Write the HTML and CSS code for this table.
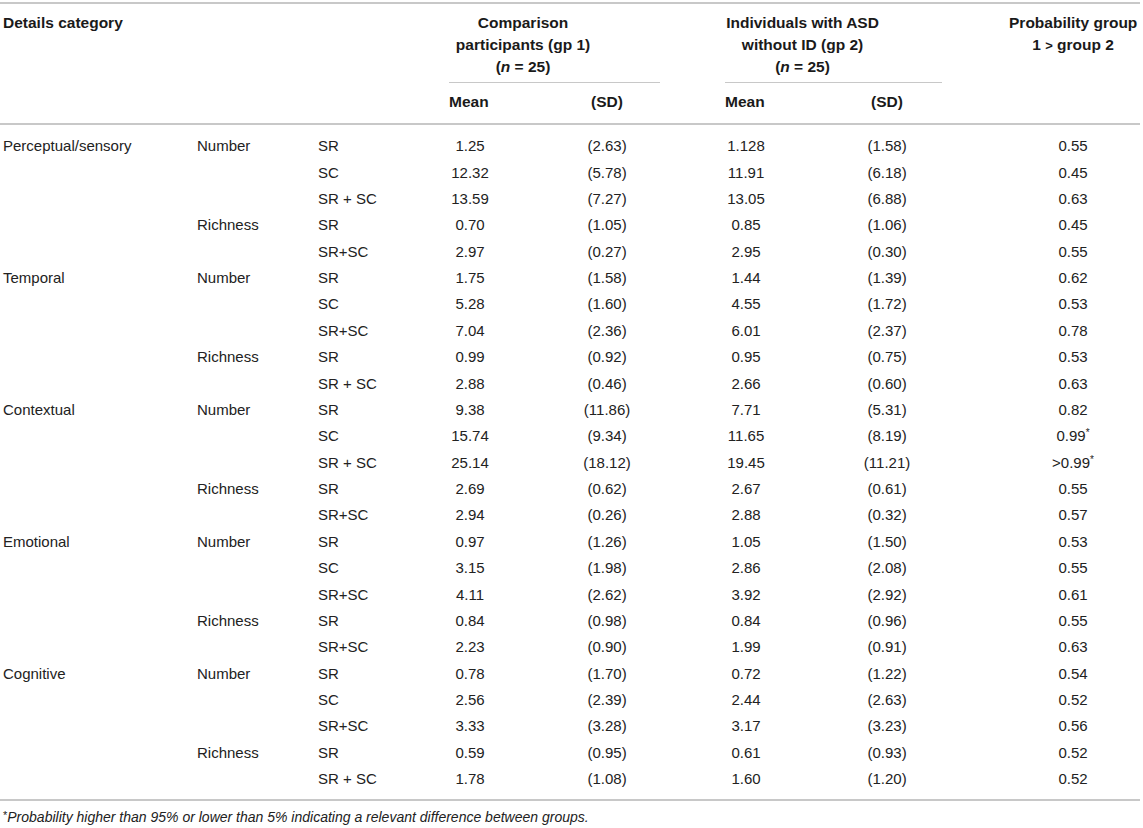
FILE: index.html
```html
<!DOCTYPE html>
<html lang="en">
<head>
<meta charset="utf-8">
<title>Details category table</title>
<link rel="stylesheet" href="styles.css">
</head>
<body>
<table class="tbl">
  <colgroup>
    <col class="w1"><col class="w2"><col class="w3"><col class="w4"><col class="w5"><col class="w6"><col class="w7"><col class="w8">
  </colgroup>
  <thead>
    <tr class="h1">
      <th class="hcat rs" colspan="3" rowspan="2">Details category</th>
      <th class="grp g1" colspan="2"><div class="grp-line"><div class="grp-title t1">Comparison<br>participants (gp 1)<br>(<i>n</i> = 25)</div></div></th>
      <th class="grp g2" colspan="2"><div class="grp-line"><div class="grp-title t2">Individuals with ASD<br>without ID (gp 2)<br>(<i>n</i> = 25)</div></div></th>
      <th class="hprob rs" rowspan="2">Probability group<br>1 <span class="gt">&gt;</span> group 2</th>
    </tr>
    <tr class="h2">
      <th class="mean">Mean</th>
      <th class="sd1">(SD)</th>
      <th class="mean">Mean</th>
      <th class="sd2">(SD)</th>
    </tr>
  </thead>
  <tbody>
    <tr><td class="c1">Perceptual/sensory</td><td class="c2">Number</td><td class="c3">SR</td><td class="mean"><span class="v">1.25</span></td><td class="sd1">(2.63)</td><td class="mean"><span class="v">1.128</span></td><td class="sd2">(1.58)</td><td class="prob">0.55</td></tr>
    <tr><td class="c1"></td><td class="c2"></td><td class="c3">SC</td><td class="mean"><span class="v">12.32</span></td><td class="sd1">(5.78)</td><td class="mean"><span class="v">11.91</span></td><td class="sd2">(6.18)</td><td class="prob">0.45</td></tr>
    <tr><td class="c1"></td><td class="c2"></td><td class="c3">SR + SC</td><td class="mean"><span class="v">13.59</span></td><td class="sd1">(7.27)</td><td class="mean"><span class="v">13.05</span></td><td class="sd2">(6.88)</td><td class="prob">0.63</td></tr>
    <tr><td class="c1"></td><td class="c2">Richness</td><td class="c3">SR</td><td class="mean"><span class="v">0.70</span></td><td class="sd1">(1.05)</td><td class="mean"><span class="v">0.85</span></td><td class="sd2">(1.06)</td><td class="prob">0.45</td></tr>
    <tr><td class="c1"></td><td class="c2"></td><td class="c3">SR+SC</td><td class="mean"><span class="v">2.97</span></td><td class="sd1">(0.27)</td><td class="mean"><span class="v">2.95</span></td><td class="sd2">(0.30)</td><td class="prob">0.55</td></tr>
    <tr><td class="c1">Temporal</td><td class="c2">Number</td><td class="c3">SR</td><td class="mean"><span class="v">1.75</span></td><td class="sd1">(1.58)</td><td class="mean"><span class="v">1.44</span></td><td class="sd2">(1.39)</td><td class="prob">0.62</td></tr>
    <tr><td class="c1"></td><td class="c2"></td><td class="c3">SC</td><td class="mean"><span class="v">5.28</span></td><td class="sd1">(1.60)</td><td class="mean"><span class="v">4.55</span></td><td class="sd2">(1.72)</td><td class="prob">0.53</td></tr>
    <tr><td class="c1"></td><td class="c2"></td><td class="c3">SR+SC</td><td class="mean"><span class="v">7.04</span></td><td class="sd1">(2.36)</td><td class="mean"><span class="v">6.01</span></td><td class="sd2">(2.37)</td><td class="prob">0.78</td></tr>
    <tr><td class="c1"></td><td class="c2">Richness</td><td class="c3">SR</td><td class="mean"><span class="v">0.99</span></td><td class="sd1">(0.92)</td><td class="mean"><span class="v">0.95</span></td><td class="sd2">(0.75)</td><td class="prob">0.53</td></tr>
    <tr><td class="c1"></td><td class="c2"></td><td class="c3">SR + SC</td><td class="mean"><span class="v">2.88</span></td><td class="sd1">(0.46)</td><td class="mean"><span class="v">2.66</span></td><td class="sd2">(0.60)</td><td class="prob">0.63</td></tr>
    <tr><td class="c1">Contextual</td><td class="c2">Number</td><td class="c3">SR</td><td class="mean"><span class="v">9.38</span></td><td class="sd1">(11.86)</td><td class="mean"><span class="v">7.71</span></td><td class="sd2">(5.31)</td><td class="prob">0.82</td></tr>
    <tr><td class="c1"></td><td class="c2"></td><td class="c3">SC</td><td class="mean"><span class="v">15.74</span></td><td class="sd1">(9.34)</td><td class="mean"><span class="v">11.65</span></td><td class="sd2">(8.19)</td><td class="prob">0.99<sup>*</sup></td></tr>
    <tr><td class="c1"></td><td class="c2"></td><td class="c3">SR + SC</td><td class="mean"><span class="v">25.14</span></td><td class="sd1">(18.12)</td><td class="mean"><span class="v">19.45</span></td><td class="sd2">(11.21)</td><td class="prob">&gt;0.99<sup>*</sup></td></tr>
    <tr><td class="c1"></td><td class="c2">Richness</td><td class="c3">SR</td><td class="mean"><span class="v">2.69</span></td><td class="sd1">(0.62)</td><td class="mean"><span class="v">2.67</span></td><td class="sd2">(0.61)</td><td class="prob">0.55</td></tr>
    <tr><td class="c1"></td><td class="c2"></td><td class="c3">SR+SC</td><td class="mean"><span class="v">2.94</span></td><td class="sd1">(0.26)</td><td class="mean"><span class="v">2.88</span></td><td class="sd2">(0.32)</td><td class="prob">0.57</td></tr>
    <tr><td class="c1">Emotional</td><td class="c2">Number</td><td class="c3">SR</td><td class="mean"><span class="v">0.97</span></td><td class="sd1">(1.26)</td><td class="mean"><span class="v">1.05</span></td><td class="sd2">(1.50)</td><td class="prob">0.53</td></tr>
    <tr><td class="c1"></td><td class="c2"></td><td class="c3">SC</td><td class="mean"><span class="v">3.15</span></td><td class="sd1">(1.98)</td><td class="mean"><span class="v">2.86</span></td><td class="sd2">(2.08)</td><td class="prob">0.55</td></tr>
    <tr><td class="c1"></td><td class="c2"></td><td class="c3">SR+SC</td><td class="mean"><span class="v">4.11</span></td><td class="sd1">(2.62)</td><td class="mean"><span class="v">3.92</span></td><td class="sd2">(2.92)</td><td class="prob">0.61</td></tr>
    <tr><td class="c1"></td><td class="c2">Richness</td><td class="c3">SR</td><td class="mean"><span class="v">0.84</span></td><td class="sd1">(0.98)</td><td class="mean"><span class="v">0.84</span></td><td class="sd2">(0.96)</td><td class="prob">0.55</td></tr>
    <tr><td class="c1"></td><td class="c2"></td><td class="c3">SR+SC</td><td class="mean"><span class="v">2.23</span></td><td class="sd1">(0.90)</td><td class="mean"><span class="v">1.99</span></td><td class="sd2">(0.91)</td><td class="prob">0.63</td></tr>
    <tr><td class="c1">Cognitive</td><td class="c2">Number</td><td class="c3">SR</td><td class="mean"><span class="v">0.78</span></td><td class="sd1">(1.70)</td><td class="mean"><span class="v">0.72</span></td><td class="sd2">(1.22)</td><td class="prob">0.54</td></tr>
    <tr><td class="c1"></td><td class="c2"></td><td class="c3">SC</td><td class="mean"><span class="v">2.56</span></td><td class="sd1">(2.39)</td><td class="mean"><span class="v">2.44</span></td><td class="sd2">(2.63)</td><td class="prob">0.52</td></tr>
    <tr><td class="c1"></td><td class="c2"></td><td class="c3">SR+SC</td><td class="mean"><span class="v">3.33</span></td><td class="sd1">(3.28)</td><td class="mean"><span class="v">3.17</span></td><td class="sd2">(3.23)</td><td class="prob">0.56</td></tr>
    <tr><td class="c1"></td><td class="c2">Richness</td><td class="c3">SR</td><td class="mean"><span class="v">0.59</span></td><td class="sd1">(0.95)</td><td class="mean"><span class="v">0.61</span></td><td class="sd2">(0.93)</td><td class="prob">0.52</td></tr>
    <tr><td class="c1"></td><td class="c2"></td><td class="c3">SR + SC</td><td class="mean"><span class="v">1.78</span></td><td class="sd1">(1.08)</td><td class="mean"><span class="v">1.60</span></td><td class="sd2">(1.20)</td><td class="prob">0.52</td></tr>
  </tbody>
</table>
<p class="note"><sup>*</sup>Probability higher than 95% or lower than 5% indicating a relevant difference between groups.</p>
</body>
</html>
```

FILE: styles.css
```css
html, body {
  margin: 0;
  padding: 0;
  background: #ffffff;
}

body {
  color: #222222;
  font-family: "Liberation Sans", Arial, Helvetica, sans-serif;
  font-size: 15px;
}

.tbl {
  width: 1140px;
  margin-top: 2px;
  border-collapse: separate;
  border-spacing: 0;
  table-layout: fixed;
  border-top: 2px solid #c8c8c8;
  border-bottom: 2px solid #c8c8c8;
}

.w1 { width: 190px; }
.w2 { width: 122px; }
.w3 { width: 131px; }
.w4 { width: 105px; }
.w5 { width: 171px; }
.w6 { width: 107px; }
.w7 { width: 177px; }
.w8 { width: 137px; }

/* ---------- header ---------- */
.tbl th {
  font-weight: bold;
  font-size: 15.5px;
  line-height: 22px;
  color: #1a1a1a;
  text-align: left;
  vertical-align: top;
  padding: 8px 6px 0 6px;
  white-space: nowrap;
}

.tbl th.rs {
  border-bottom: 2px solid #c8c8c8;
}

.tbl th.hcat {
  padding-left: 3px;
}

.tbl th.hprob {
  text-align: center;
  padding-right: 3px;
}

.gt {
  font-size: 13px;
}

.tbl th.g1 {
  padding-right: 59px;
}

.tbl th.g2 {
  padding-right: 61px;
}

.grp-line {
  border-bottom: 1px solid #c8c8c8;
  padding-bottom: 4px;
}

.grp-title {
  text-align: center;
}

.t1 { width: 148px; }
.t2 { width: 155px; }

.h2 th {
  padding: 8px 6px 10px 6px;
  border-bottom: 2px solid #c8c8c8;
}

.h2 th.sd1 {
  text-align: center;
  padding-right: 59px;
}

.h2 th.sd2 {
  text-align: center;
  padding-right: 61px;
}

/* ---------- body ---------- */
.tbl td {
  line-height: 20px;
  padding: 3.2px 6px;
  vertical-align: top;
  white-space: nowrap;
}

.tbl tbody tr:first-child td {
  padding-top: 11.2px;
}

.tbl tbody tr:last-child td {
  padding-bottom: 10.2px;
}

.tbl td.c1 { padding-left: 3px; }
.tbl td.c2 { padding-left: 7px; }
.tbl td.c3 { padding-left: 6px; }

.tbl td.mean .v {
  display: inline-block;
  width: 42px;
  text-align: center;
}

.tbl td.sd1 {
  text-align: center;
  padding-right: 59px;
}

.tbl td.sd2 {
  text-align: center;
  padding-right: 61px;
}

.tbl td.prob {
  text-align: center;
  padding-right: 3px;
}

sup {
  font-size: 10px;
  line-height: 0;
  vertical-align: 5px;
}

/* ---------- footnote ---------- */
.note {
  margin: 8px 0 0 3px;
  font-size: 14px;
  line-height: 16px;
  font-style: italic;
  color: #222222;
}

.note sup {
  font-style: normal;
  font-size: 11px;
  vertical-align: 3px;
}
```
